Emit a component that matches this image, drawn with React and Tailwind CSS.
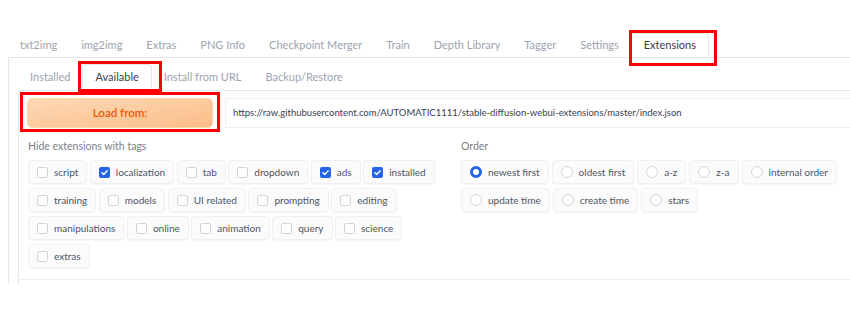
import React from "react";

const topTabs = ["txt2img", "img2img", "Extras", "PNG Info", "Checkpoint Merger", "Train", "Depth Library", "Tagger", "Settings", "Extensions"];
const subTabs = ["Installed", "Available", "Install from URL", "Backup/Restore"];

const tags = [
  ["script", false], ["localization", true], ["tab", false], ["dropdown", false], ["ads", true], ["installed", true],
  ["training", false], ["models", false], ["UI related", false], ["prompting", false], ["editing", false],
  ["manipulations", false], ["online", false], ["animation", false], ["query", false], ["science", false],
  ["extras", false],
];
const tagRows = [6, 5, 5, 1];

const orders = ["newest first", "oldest first", "a-z", "z-a", "internal order", "update time", "create time", "stars"];

function Chip({ children }) {
  return (
    <div className="flex items-center h-[24px] pl-[8px] pr-[8px] gap-[6px] rounded-[4px] border border-[#eef0f3] bg-[#fbfbfc] shadow-[0_1px_1px_rgba(0,0,0,0.04)] text-[10px] text-[#4b5563]">
      {children}
    </div>
  );
}

function Check({ on }) {
  if (on) {
    return (
      <span className="w-[11px] h-[11px] rounded-[2px] bg-[#2563eb] flex items-center justify-center">
        <svg width="9" height="9" viewBox="0 0 12 12" fill="none">
          <path d="M2.5 6.2 5 8.6 9.6 3.6" stroke="white" strokeWidth="1.8" strokeLinecap="round" strokeLinejoin="round" />
        </svg>
      </span>
    );
  }
  return <span className="w-[11px] h-[11px] rounded-[2px] border border-[#d1d5db] bg-white" />;
}

function Radio({ on }) {
  if (on) {
    return <span className="w-[12px] h-[12px] rounded-full border-[3px] border-[#2563eb] bg-white" />;
  }
  return <span className="w-[12px] h-[12px] rounded-full border border-[#d1d5db] bg-white" />;
}

export default function App() {
  let idx = 0;
  const rows = tagRows.map((n) => {
    const r = tags.slice(idx, idx + n);
    idx += n;
    return r;
  });

  return (
    <div className="relative w-[850px] h-[309px] overflow-hidden bg-white font-['Lato',sans-serif]">
      {/* top tabs */}
      <div className="ml-[8px] mt-[33px] flex border-b border-[#e5e7eb]">
        {topTabs.map((t) => (
          <div
            key={t}
            className={
              t === "Extensions"
                ? "h-[24px] px-[12px] flex items-center text-[11px] text-[#374151] bg-white border border-b-0 border-[#e5e7eb] rounded-t-[4px] -mb-px"
                : "h-[24px] px-[12px] flex items-center text-[11px] text-[#9ca3af]"
            }
          >
            {t}
          </div>
        ))}
      </div>

      {/* outer panel */}
      <div className="ml-[8px] h-[226px] border-l border-[#e5e7eb] pl-[9px] pt-[6px]">
        <div className="flex border-b border-[#e5e7eb]">
          {subTabs.map((t) => (
            <div
              key={t}
              className={
                t === "Available"
                  ? "h-[26px] px-[12px] flex items-center text-[11px] text-[#374151] bg-white border border-b-0 border-[#e5e7eb] rounded-t-[4px] -mb-px"
                  : "h-[26px] px-[12px] flex items-center text-[11px] text-[#9ca3af]"
              }
            >
              {t}
            </div>
          ))}
        </div>

        {/* inner panel */}
        <div className="h-[194px] border-l border-[#e5e7eb] pl-[8px] pt-[7px] flex flex-col">
          <div className="flex gap-[12px] items-start">
            <button className="w-[186px] h-[30px] rounded-[5px] border border-[#fed7aa] bg-gradient-to-br from-[#fdd9b6] to-[#fbbd88] text-[#ea580c] text-[11.5px] font-semibold">
              Load from:
            </button>
            <div className="flex-1 h-[30px] flex items-center pl-[7px] border border-r-0 border-[#eceef1] bg-white text-[9.5px] text-[#374151]">
              https://raw.githubusercontent.com/AUTOMATIC1111/stable-diffusion-webui-extensions/master/index.json
            </div>
          </div>

          <div className="flex gap-[12px] mt-[11px] pl-px">
            <div className="w-[421px]">
              <div className="text-[10.5px] text-[#7b7f87] leading-[14px] mb-[7px]">Hide extensions with tags</div>
              <div className="flex flex-col gap-[4px]">
                {rows.map((r, i) => (
                  <div key={i} className="flex gap-[2.5px]">
                    {r.map(([t, on]) => (
                      <Chip key={t}>
                        <Check on={on} />
                        <span>{t}</span>
                      </Chip>
                    ))}
                  </div>
                ))}
              </div>
            </div>
            <div className="flex-1">
              <div className="text-[10.5px] text-[#7b7f87] leading-[14px] mb-[7px]">Order</div>
              <div className="flex flex-wrap w-[385px] gap-x-[3px] gap-y-[4px]">
                {orders.map((t, i) => (
                  <Chip key={t}>
                    <Radio on={i === 0} />
                    <span>{t}</span>
                  </Chip>
                ))}
              </div>
            </div>
          </div>

          <div className="mt-auto mb-[5px] -ml-[8px] border-t border-[#eceef1]" />
        </div>
      </div>

      {/* annotation boxes */}
      <div className="absolute left-[629px] top-[30px] w-[88px] h-[36px] border-[3px] border-[#ff0000]" />
      <div className="absolute left-[78px] top-[61px] w-[84px] h-[31px] border-[3px] border-[#ff0000]" />
      <div className="absolute left-[20px] top-[92px] w-[200px] h-[40px] border-[3px] border-[#ff0000]" />
    </div>
  );
}
